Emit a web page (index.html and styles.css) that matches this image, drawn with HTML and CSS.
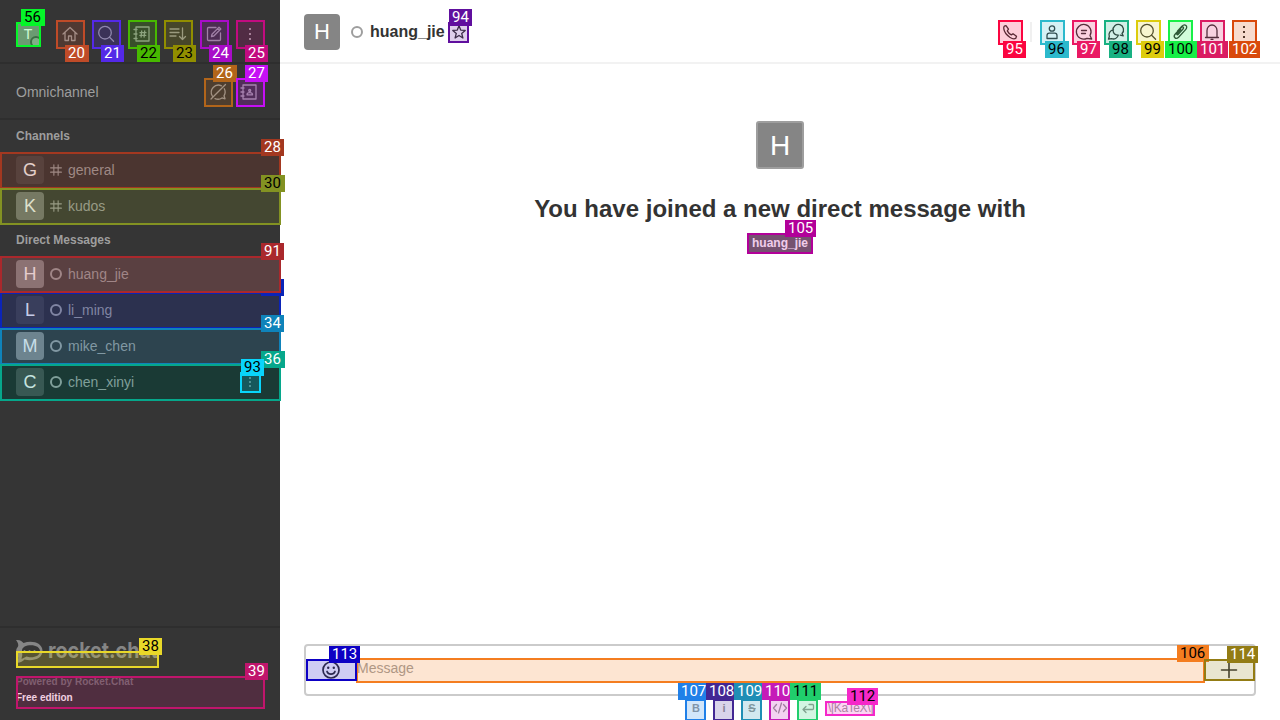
FILE: index.html
```html
<!DOCTYPE html>
<html lang="en">
<head>
<meta charset="utf-8">
<title>huang_jie</title>
<link rel="stylesheet" href="styles.css">
</head>
<body>
<svg class="defs" aria-hidden="true">
  <symbol id="i-home" viewBox="0 0 20 20"><path d="M3 10 10 3.500l7 6.500M5 8.500V16.500h3.500v-4.500h3v4.500H15V8.500"/></symbol>
  <symbol id="i-search" viewBox="0 0 20 20"><circle cx="9" cy="8.700" r="6.300"/><path d="m13.600 13.200 4 4"/></symbol>
  <symbol id="i-dir" viewBox="0 0 20 20"><path d="M4 3h13v14H4zM2 5.500h3M2 10h3M2 14.500h3M9.700 7l-.6 6M12.700 7l-.6 6M8 8.700h6M7.800 11.300h6"/></symbol>
  <symbol id="i-sort" viewBox="0 0 20 20"><path d="M2 5h9M2 8.500h9M2 12h6M14.500 4v11.500M11.500 12.500l3 3 3-3"/></symbol>
  <symbol id="i-edit" viewBox="0 0 20 20"><path d="M12 3.500H4.500a1 1 0 0 0-1 1v11a1 1 0 0 0 1 1h11a1 1 0 0 0 1-1V9M8 10.200l7-7 1.800 1.800-7 7L7.500 12.500zM13.500 4.700l1.800 1.800"/></symbol>
  <symbol id="i-kebab" viewBox="0 0 20 20"><path class="solid" d="M9 4h2v2H9zM9 9h2v2H9zM9 14h2v2H9z"/></symbol>
  <symbol id="i-away" viewBox="0 0 20 20"><path d="M13.500 3.800A7.200 7.200 0 0 0 4.300 14M3 17 17.500 2.500M7 16.600c3 1.200 5 .8 7-.7l3 .9-1-3a7 7 0 0 0 .3-7"/></symbol>
  <symbol id="i-contact" viewBox="0 0 20 20"><path d="M4 3h13v14H4zM2 6h3M2 10h3M2 14h3M8 12.800c0-2.800 5.500-2.800 5.500 0z"/><circle cx="10.700" cy="8.500" r="1"/></symbol>
  <symbol id="i-hash" viewBox="0 0 14 14"><path d="M4.500 1v12M9.500 1v12M.7 4.500h12.600M.7 9.500h12.600"/></symbol>
  <symbol id="i-star" viewBox="0 0 16 16"><path d="m8 1.800 1.700 4.300 4.500.3-3.500 3 1.200 4.600L8 11.500 4.100 14l1.200-4.600-3.500-3 4.500-.3z"/></symbol>
  <symbol id="i-phone" viewBox="0 0 20 20"><path d="M4.300 4.200 6 3.600l2.500 3.600-1.200 1.700c1 2 2.200 3.100 4 4l1.700-1.200 3.500 2.600-.7 1.900c-1.200 1-3.300.8-6-1C6.300 12.700 4.300 10 3.800 6.800c-.2-1.200 0-2 .5-2.600z"/></symbol>
  <symbol id="i-user" viewBox="0 0 20 20"><circle cx="10" cy="6.500" r="2.700"/><path d="M5 16.500v-3c0-1.500 1-2.300 2.300-2.300h5.400c1.300 0 2.300.8 2.300 2.300v3z"/></symbol>
  <symbol id="i-thread" viewBox="0 0 20 20"><path d="M16 13.500A7.300 7.300 0 1 0 13 16.300L17.700 17zM7.500 8.500h5M7.500 11.500h4"/></symbol>
  <symbol id="i-disc" viewBox="0 0 20 20"><path d="M16 11.500A5.300 5.300 0 1 0 7 8.500M16 11.500l1.200 2.300-3-.6M7.500 7.800A5 5 0 0 0 3.300 14.500L2.500 17.200 5.500 16.600A5 5 0 0 0 12.300 13.200M7 8.500c.3 2.700 2.500 4.700 5.300 4.700"/></symbol>
  <symbol id="i-clip" viewBox="0 0 20 20"><path d="m8 12.500 5-5.500c1.400-1.600-.3-3-1.700-1.500l-6 6.500c-2.700 3 .5 6 3.300 3.200l7-7.600c3-3.400-.7-6.500-3.700-3.300l-4.500 5M8 12.500c-.7.800-1.800-.1-1-1l3.600-4"/></symbol>
  <symbol id="i-bell" viewBox="0 0 20 20"><path d="M3.500 15.500h13M5 15.500V8.500a5 5.500 0 0 1 10 0v7M9 17.300h2"/></symbol>
  <symbol id="i-smile" viewBox="0 0 20 20"><circle cx="10" cy="10" r="8"/><path d="M6 11.500c1.300 3.500 6.700 3.500 8 0"/><circle class="solid" cx="7.200" cy="7.800" r="1.200"/><circle class="solid" cx="12.800" cy="7.800" r="1.200"/></symbol>
  <symbol id="i-plus" viewBox="0 0 20 20"><path d="M10 2.500v15M2.500 10h15"/></symbol>
  <symbol id="i-code" viewBox="0 0 16 16"><path d="M4.500 4.500 1.500 8l3 3.500M11.500 4.500l3 3.500-3 3.500M9.500 3l-3 10"/></symbol>
  <symbol id="i-enter" viewBox="0 0 16 16"><path d="M6 6.500 3 9.500l3 3M3 9.500h9.500q1 0 1-1V5.500q0-1-1-1H9"/></symbol>
</svg>

<div class="app">
  <aside class="sidebar">
    <header class="topbar">
      <div class="me">T<i></i></div>
      <div class="tools">
        <svg><use href="#i-home"/></svg><svg><use href="#i-search"/></svg><svg><use href="#i-dir"/></svg><svg><use href="#i-sort"/></svg><svg><use href="#i-edit"/></svg><svg><use href="#i-kebab"/></svg>
      </div>
    </header>
    <div class="omni"><span>Omnichannel</span><div class="tools"><svg><use href="#i-away"/></svg><svg><use href="#i-contact"/></svg></div></div>
    <nav class="rooms">
      <h3>Channels</h3>
      <div class="room"><b class="avatar dim">G</b><svg class="hash"><use href="#i-hash"/></svg><span>general</span></div>
      <div class="room"><b class="avatar mid">K</b><svg class="hash"><use href="#i-hash"/></svg><span>kudos</span></div>
      <h3>Direct Messages</h3>
      <div class="room active"><b class="avatar light">H</b><i class="status"></i><span>huang_jie</span></div>
      <div class="room"><b class="avatar dim">L</b><i class="status"></i><span>li_ming</span></div>
      <div class="room"><b class="avatar light">M</b><i class="status"></i><span>mike_chen</span></div>
      <div class="room hover"><b class="avatar dim">C</b><i class="status"></i><span>chen_xinyi</span><svg class="more"><use href="#i-kebab"/></svg></div>
    </nav>
    <footer class="foot">
      <svg class="logo" viewBox="0 0 144 26">
        <path d="M0 2c4-.5 6 1 7.500 3 9-3 19 0 19 8s-10 10.500-18 8.500c-2 2.500-5 3.500-8.500 3 2-2 2.500-4 2-6-2.500-4-2.500-7 0-10 .8-2.500-.5-4.500-2-6.500z"/>
        <path class="bubble" d="M6 13c0-4 4-5.700 9-5.700s9 2.200 9 5.900-4 6-9 6c-2 0-3-.2-4.500-.7L5.500 21l.8-4C6.200 16 6 14.500 6 13z"/>
        <circle cx="8.500" cy="13" r="1"/><circle cx="13.500" cy="13" r="1"/><circle cx="18.500" cy="13" r="1"/>
        <text x="32" y="19.500" textLength="110" lengthAdjust="spacingAndGlyphs">rocket.chat</text>
      </svg>
      <div class="powered">Powered by Rocket.Chat</div>
      <div class="edition">Free edition</div>
    </footer>
  </aside>

  <main class="main">
    <header class="roomhead">
      <div class="face">H</div><i class="status"></i><h1>huang_jie</h1><svg class="star"><use href="#i-star"/></svg>
      <div class="actions">
        <svg><use href="#i-phone"/></svg><i class="sep"></i><svg><use href="#i-user"/></svg><svg><use href="#i-thread"/></svg><svg><use href="#i-disc"/></svg><svg><use href="#i-search"/></svg><svg><use href="#i-clip"/></svg><svg><use href="#i-bell"/></svg><svg><use href="#i-kebab"/></svg>
      </div>
    </header>
    <section class="intro">
      <div class="bigface">H</div>
      <h2>You have joined a new direct message with</h2>
      <span class="tag">huang_jie</span>
    </section>
    <div class="composer">
      <svg class="smile"><use href="#i-smile"/></svg><span>Message</span><svg><use href="#i-plus"/></svg>
    </div>
    <div class="format"><b>B</b><b>i</b><b><s>S</s></b><svg><use href="#i-code"/></svg><svg><use href="#i-enter"/></svg><span class="katex">\[KaTeX\]</span></div>
  </main>
</div>
<div class="marks" id="marks"></div>
<script src="marks.js"></script>
</body>
</html>
```
FILE: styles.css
```css
* { box-sizing: border-box; }
body { margin: 0; width: 1280px; height: 720px; overflow: hidden; background: #fff; font-family: "Liberation Sans", Arial, sans-serif; }
h1, h2, h3 { margin: 0; }
svg { fill: none; stroke: currentColor; stroke-width: 1.3; stroke-linejoin: round; stroke-linecap: round; flex: none; }
.solid { fill: currentColor; stroke: none; }
.defs { position: absolute; width: 0; height: 0; }
.app { display: flex; height: 720px; }

.sidebar { width: 280px; display: flex; flex-direction: column; background: #353535; color: #9e9e9e; font-size: 14px; }
.topbar { height: 64px; padding: 6px 16px 0; display: flex; align-items: center; justify-content: space-between; border-bottom: 2px solid #2e2e2e; }
.me { position: relative; width: 24px; height: 24px; background: #858585; color: #fff; text-align: center; line-height: 24px; border-radius: 2px; overflow: hidden; }
.me i { position: absolute; left: 14px; top: 14px; width: 12px; height: 12px; border: 2px solid #4c4c4c; border-radius: 50%; background: #9e9e9e; }
.tools { display: flex; gap: 16px; padding-right: 5px; }
.topbar .tools { padding-right: 4px; }
.tools svg { width: 20px; height: 20px; }
.omni { height: 56px; padding: 2px 16px 0; display: flex; align-items: center; justify-content: space-between; border-bottom: 2px solid #2e2e2e; }
.omni .tools { gap: 11px; padding-right: 5px; }
.rooms { flex: 1; }
.rooms h3 { height: 32px; line-height: 32px; padding-left: 16px; font-size: 12px; }
.room { height: 36px; padding: 0 20px 0 16px; display: flex; align-items: center; }
.room.active { background: #474747; }
.room.hover { background: #202020; }
.room span { flex: 1; }
.avatar { width: 28px; height: 28px; margin-right: 6px; border-radius: 4px; font-size: 18px; font-weight: 400; line-height: 28px; text-align: center; color: #f5f5f5; }
.dim { background: #454545; }
.mid { background: #747474; }
.light { background: #858585; }
.hash { width: 12px; height: 12px; margin-right: 6px; }
.status { width: 12px; height: 12px; margin-right: 6px; border: 2px solid #9e9e9e; border-radius: 50%; }
.more { width: 20px; height: 16px; color: #b5b5b5; stroke-width: 1.5; }
.foot { height: 94px; padding: 10px 16px 0; border-top: 2px solid #2e2e2e; font-size: 10px; font-weight: 700; }
.logo { display: block; width: 144px; height: 26px; fill: #858585; stroke: none; }
.logo text { font: 700 22px Inter, sans-serif; }
.logo .bubble { fill: #353535; }
.powered { margin-top: 10px; line-height: 16px; color: #727272; }
.edition { line-height: 16px; color: #fff; }

.main { width: 1000px; display: flex; flex-direction: column; color: #2f343d; }
.roomhead { height: 64px; flex: none; padding: 2px 22px 0 24px; display: flex; align-items: center; border-bottom: 2px solid #f2f2f2; color: #333; }
.face { width: 36px; height: 36px; margin-right: 11px; background: #858585; color: #fff; border-radius: 4px; font-size: 22px; line-height: 36px; text-align: center; }
.roomhead .status { margin-right: 7px; }
.roomhead h1 { font-size: 16px; line-height: 24px; }
.star { width: 16px; height: 16px; margin-left: 6px; }
.actions { margin-left: auto; display: flex; align-items: center; gap: 12px; padding-right: 4px; }
.actions svg { width: 20px; height: 20px; }
.sep { width: 2px; height: 20px; margin: 0 -2px; background: #f0f0f0; }
.intro { flex: 1; display: flex; flex-direction: column; align-items: center; padding-top: 57px; color: #333; }
.bigface { width: 48px; height: 48px; border: 2px solid #9e9e9e; border-radius: 3px; background: #858585; color: #fff; font-size: 28px; line-height: 46px; text-align: center; }
.intro h2 { margin-top: 24px; font-size: 24px; line-height: 32px; }
.tag { margin-top: 9px; padding: 0 4px; background: #666; color: #fff; font-size: 12px; font-weight: 700; line-height: 18px; }
.composer { height: 52px; flex: none; margin: 0 24px; padding: 0 15px; display: flex; align-items: center; border: 2px solid #cbcbcb; border-radius: 4px; color: #333; }
.composer svg { width: 20px; height: 20px; stroke-width: 1.6; }
.composer .smile { stroke-width: 1.7; }
.composer span { flex: 1; padding: 0 0 4px 16px; color: #9e9e9e; font-size: 14px; }
.format { height: 24px; flex: none; padding-left: 408px; display: flex; gap: 12px; align-items: center; color: #999; font-size: 11px; line-height: 24px; }
.format b, .format svg { width: 16px; height: 16px; line-height: 16px; text-align: center; }
.katex { font-size: 12px; letter-spacing: -.4px; width: 50px; white-space: nowrap; }

.marks { position: absolute; inset: 0; overflow: hidden; }
.mark { position: absolute; border: 2px solid; }
.mark::before { content: ""; position: absolute; inset: 0; background: currentColor; opacity: .2; }
.label { position: absolute; height: 17px; padding-left: 3px; font-family: Roboto, sans-serif; font-size: 15px; line-height: 17px; white-space: nowrap; }
.tucked { clip-path: polygon(20px 0, 100% 0, 100% 100%, 0 100%, 0 14px, 20px 14px); }
```
FILE: marks.js
```javascript
// id, colour, text colour, box x, y, w, h, label x, y, w
const W = '#fff', K = '#000';
const marks = [
  [20, '#bf4b28', W, 56, 20, 29, 29, 65, 45, 24],
  [21, '#5429e8', W, 92, 20, 29, 29, 101, 45, 23],
  [22, '#47b900', K, 128, 20, 29, 29, 137, 45, 23],
  [23, '#918e00', K, 164, 20, 29, 29, 173, 45, 23],
  [24, '#a90cc9', W, 200, 20, 29, 29, 209, 45, 23],
  [25, '#c20b80', W, 236, 20, 29, 29, 245, 45, 23],
  [26, '#b2651a', W, 204, 78, 29, 29, 213, 65, 24],
  [27, '#c60ff5', W, 236, 78, 29, 29, 245, 65, 23],
  [28, '#a33820', W, 0, 152, 281, 37, 261, 139, 23],
  [30, '#839222', K, 0, 188, 281, 37, 261, 175, 24],
  ['', '#0b24b8', W, 0, 292, 281, 37, 261, 279, 23],
  [34, '#0f83ba', W, 0, 328, 281, 37, 261, 315, 23],
  [36, '#06a78b', W, 0, 364, 281, 37, 261, 351, 24],
  [38, '#e8d829', K, 16, 651, 143, 17, 139, 638, 23],
  [39, '#c0156c', W, 16, 676, 249, 33, 245, 663, 23],
  [56, '#05f629', K, 16, 22, 25, 25, 21, 9, 24],
  [91, '#aa282c', W, 0, 256, 281, 37, 261, 243, 23],
  [93, '#09d5fb', K, 240, 372, 21, 21, 241, 359, 23],
  [94, '#600f9e', W, 448, 22, 21, 21, 449, 9, 23],
  [95, '#fb0540', W, 998, 20, 25, 25, 1003, 41, 23],
  [96, '#2cb9cc', K, 1040, 20, 25, 25, 1045, 41, 24],
  [97, '#ea1863', W, 1072, 20, 25, 25, 1077, 41, 23],
  [98, '#18b182', K, 1104, 20, 25, 25, 1109, 41, 23],
  [99, '#ddcc0d', K, 1136, 20, 25, 25, 1141, 41, 23],
  [100, '#17f047', K, 1168, 20, 25, 25, 1165, 41, 32],
  [101, '#da1c62', W, 1200, 20, 25, 25, 1197, 41, 31],
  [102, '#d9490b', W, 1232, 20, 25, 25, 1229, 41, 31],
  [105, '#b20099', W, 747, 233, 66, 21, 785, 220, 31],
  [106, '#f47d20', K, 356, 658, 849, 25, 1177, 645, 32],
  [107, '#2080e8', W, 685, 699, 21, 22, 678, 683, 31],
  [108, '#432794', W, 713, 699, 21, 22, 706, 683, 31],
  [109, '#1f8eb5', W, 741, 699, 21, 22, 734, 683, 31],
  [110, '#c51bb8', W, 769, 699, 21, 22, 762, 683, 31],
  [111, '#20ce6c', K, 797, 699, 21, 22, 790, 683, 31],
  [112, '#f528c9', K, 825, 701, 50, 15, 847, 688, 31],
  [113, '#0d00c4', W, 306, 659, 51, 22, 329, 646, 31],
  [114, '#937c14', W, 1204, 659, 51, 22, 1227, 646, 31]
];
const layer = document.getElementById('marks');
for (const [id, color, ink, x, y, w, h, lx, ly, lw] of marks) {
  const box = document.createElement('div');
  box.className = 'mark';
  box.style.cssText = `left:${x}px;top:${y}px;width:${w}px;height:${h}px;color:${color};border-color:${color}`;
  const label = document.createElement('div');
  label.className = id ? 'label' : 'label tucked';
  label.textContent = id;
  label.style.cssText = `left:${lx}px;top:${ly}px;width:${lw}px;background:${color};color:${ink}`;
  layer.append(box, label);
}
```
